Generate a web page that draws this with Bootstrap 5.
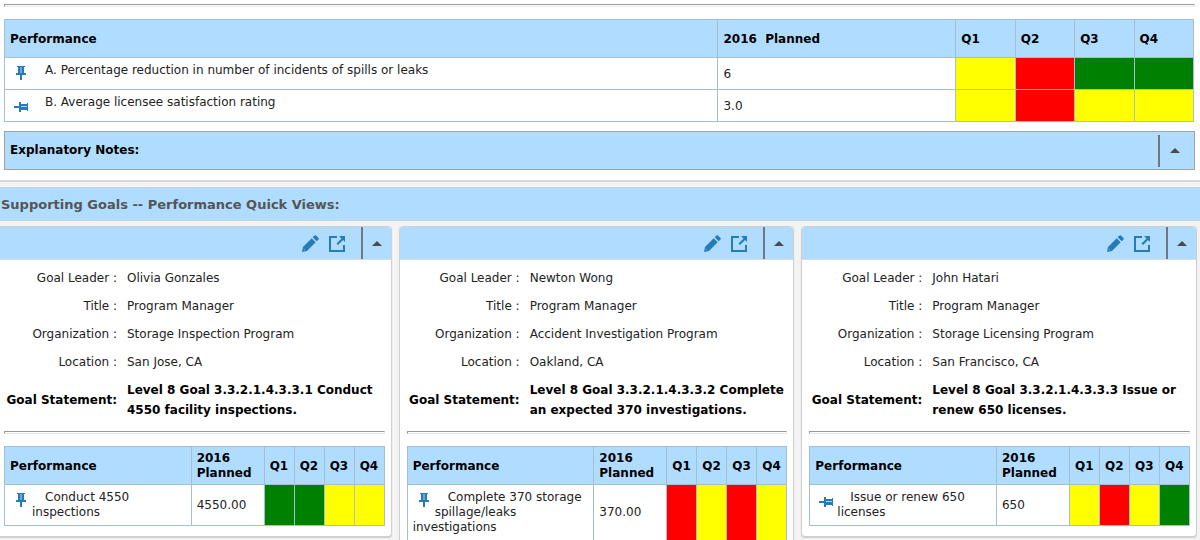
<!DOCTYPE html>
<html lang="en">
<head>
<meta charset="utf-8">
<meta name="viewport" content="width=device-width, initial-scale=1">
<title>Goal Performance</title>
<link href="https://cdn.jsdelivr.net/npm/bootstrap@5.3.0/dist/css/bootstrap.min.css" rel="stylesheet">
<style>
  body { background: #f3f3f3; color: #222; font-family: "DejaVu Sans", Verdana, sans-serif; font-size: 12px; line-height: 15px; overflow-x: hidden; }
  .goal-panel { padding: 4px 5px 10px 4px; border-bottom: 2px solid #d8d8d8; }
  .rule { height: 3px; margin: 0; opacity: 1; border: 1px solid #e8e8e8; border-top-color: #999; border-left-color: #999; }
  .bar { background: #b0ddff; color: #000; }

  .measures-area { padding: 12px 1px 9px 0; }
  .measures { width: 100%; table-layout: fixed; border-collapse: collapse; border: 1px solid #a6bfcf; }
  .measures th, .measures td { border: 1px solid #a6bfcf; padding: 5px; vertical-align: middle; }
  .measures th { background: #b0ddff; color: #000; height: 38px; padding: 4px 0 3px 5px; }
  .measures td.yellow { background: #ff0; }
  .measures td.red { background: #f00; }
  .measures td.green { background: #008000; }
  .measures .task { vertical-align: top; text-indent: 13px; }
  .wide td { padding-bottom: 4px; }
  .wide .plan { width: 20%; }
  .wide .quarter { width: 5%; }
  .compact { margin-top: 12px; }
  .compact .plan { width: 73px; }
  .compact .quarter { width: 30px; }
  .pin { float: left; width: 22px; height: 22px; fill: #267bb9; }

  .notes { height: 39px; padding: 0 5px; border: 1px solid #a3a3a3; }
  .toggle { width: 30px; height: 32px; padding: 0; border: 0; border-left: 2px solid #6d7880; background: none; color: #4a4a4a; }
  .toggle svg { width: 10px; height: 5px; fill: currentColor; }
  .notes .toggle { width: 31px; }

  .section-title { margin: 5px 0; padding: 8px 1px 7px; font-size: 13px; line-height: 17px; color: #555; border: 1px solid #ccd5db; border-width: 1px 0; }
  .goals { display: grid; grid-template-columns: repeat(3, minmax(0, 1fr)); gap: 7px; margin: 0 3px 0 -4px; }
  .goal { --bs-card-border-radius: 4px; --bs-card-inner-border-radius: 3px; --bs-card-border-color: #d0d0d0; color: #222; box-shadow: 0 1px 1px #ccc; }
  .goal-head { height: 33px; border-bottom: 1px solid #d4dde3; border-radius: 3px 3px 0 0; }
  .goal-body { padding: 8px 6px 10px 7px; }
  .actions { gap: 10px; margin-right: 15px; }
  .actions svg { width: 17px; height: 17px; fill: #267bb9; }
  .facts { display: grid; grid-template-columns: 113px minmax(0, 1fr); gap: 8px 10px; margin: 0 0 11px; line-height: 20px; align-items: center; }
  .facts dt { font-weight: normal; text-align: right; white-space: nowrap; }
  .facts dd { margin: 0; }
  .facts .statement { font-weight: bold; color: #000; }
</style>
</head>
<body>

<svg class="d-none" aria-hidden="true">
  <symbol id="pin-down" viewBox="0 0 22 22"><path d="M7 3h8v1h-1v6h2v2h-4v5h-2v-5H6v-2h2V4H7z"/><path d="M10.500 4h1v6h-1z" fill="#b5d5ed"/></symbol>
  <symbol id="pin-side" viewBox="0 0 22 22"><path d="M18 8v8h-1v-1h-6v2H9v-4H4v-2h5V7h2v2h6V8z"/><path d="M11 11h6v1h-6z" fill="#b5d5ed"/></symbol>
  <symbol id="up" viewBox="0 0 10 5"><path d="M0 5 5 0l5 5z"/></symbol>
  <symbol id="pencil" viewBox="0 0 17 17"><path d="M0 17 1 12 9.700 3.300 13.700 7.300 5 16zM10.700 2.300l1.800-1.800q.8-.6 1.500 0l2.500 2.500q.6.7 0 1.500l-1.800 1.800z"/><path d="M1.800 14l1.200 1.200" stroke="#8fc4ea" stroke-width=".7"/></symbol>
  <symbol id="popout" viewBox="0 0 17 17"><path d="M0 1h8v2H2v12h12v-5h2v7H0z"/><path d="M10 1h6v6L14 5 9 10 7.500 8.500l5-5z"/></symbol>
</svg>

<section class="goal-panel bg-white">
  <hr class="rule">
  <div class="measures-area">
    <table class="measures wide">
      <thead>
        <tr><th>Performance</th><th class="plan">2016&nbsp; Planned</th><th class="quarter">Q1</th><th class="quarter">Q2</th><th class="quarter">Q3</th><th class="quarter">Q4</th></tr>
      </thead>
      <tbody>
        <tr><td class="task"><svg class="pin"><use href="#pin-down"/></svg>A. Percentage reduction in number of incidents of spills or leaks</td><td>6</td><td class="yellow"></td><td class="red"></td><td class="green"></td><td class="green"></td></tr>
        <tr><td class="task"><svg class="pin"><use href="#pin-side"/></svg>B. Average licensee satisfaction rating</td><td>3.0</td><td class="yellow"></td><td class="red"></td><td class="yellow"></td><td class="yellow"></td></tr>
      </tbody>
    </table>
  </div>
  <div class="notes bar d-flex align-items-center justify-content-between fw-bold">
    <span>Explanatory Notes:</span>
    <button type="button" class="toggle" aria-label="Collapse notes"><svg class="d-block mx-auto"><use href="#up"/></svg></button>
  </div>
</section>

<h2 class="section-title bar fw-bold">Supporting Goals -- Performance Quick Views:</h2>

<main class="goals align-items-start">
  <article class="card goal">
    <header class="goal-head bar d-flex align-items-center justify-content-end">
      <div class="actions d-flex">
        <a class="d-flex" href="#" aria-label="Edit goal"><svg><use href="#pencil"/></svg></a>
        <a class="d-flex" href="#" aria-label="Open goal"><svg><use href="#popout"/></svg></a>
      </div>
      <button type="button" class="toggle" aria-label="Collapse goal"><svg class="d-block mx-auto"><use href="#up"/></svg></button>
    </header>
    <div class="goal-body">
      <dl class="facts">
        <dt>Goal Leader :</dt><dd>Olivia Gonzales</dd>
        <dt>Title :</dt><dd>Program Manager</dd>
        <dt>Organization :</dt><dd>Storage Inspection Program</dd>
        <dt>Location :</dt><dd>San Jose, CA</dd>
        <dt class="statement">Goal Statement:</dt><dd class="statement">Level 8 Goal 3.3.2.1.4.3.3.1 Conduct 4550 facility inspections.</dd>
      </dl>
      <hr class="rule">
      <table class="measures compact">
        <thead><tr><th>Performance</th><th class="plan">2016 Planned</th><th class="quarter">Q1</th><th class="quarter">Q2</th><th class="quarter">Q3</th><th class="quarter">Q4</th></tr></thead>
        <tbody><tr><td class="task"><svg class="pin"><use href="#pin-down"/></svg>Conduct 4550 inspections</td><td>4550.00</td><td class="green"></td><td class="green"></td><td class="yellow"></td><td class="yellow"></td></tr></tbody>
      </table>
    </div>
  </article>

  <article class="card goal">
    <header class="goal-head bar d-flex align-items-center justify-content-end">
      <div class="actions d-flex">
        <a class="d-flex" href="#" aria-label="Edit goal"><svg><use href="#pencil"/></svg></a>
        <a class="d-flex" href="#" aria-label="Open goal"><svg><use href="#popout"/></svg></a>
      </div>
      <button type="button" class="toggle" aria-label="Collapse goal"><svg class="d-block mx-auto"><use href="#up"/></svg></button>
    </header>
    <div class="goal-body">
      <dl class="facts">
        <dt>Goal Leader :</dt><dd>Newton Wong</dd>
        <dt>Title :</dt><dd>Program Manager</dd>
        <dt>Organization :</dt><dd>Accident Investigation Program</dd>
        <dt>Location :</dt><dd>Oakland, CA</dd>
        <dt class="statement">Goal Statement:</dt><dd class="statement">Level 8 Goal 3.3.2.1.4.3.3.2 Complete an expected 370 investigations.</dd>
      </dl>
      <hr class="rule">
      <table class="measures compact">
        <thead><tr><th>Performance</th><th class="plan">2016 Planned</th><th class="quarter">Q1</th><th class="quarter">Q2</th><th class="quarter">Q3</th><th class="quarter">Q4</th></tr></thead>
        <tbody><tr><td class="task"><svg class="pin"><use href="#pin-down"/></svg>Complete 370 storage spillage/leaks investigations</td><td>370.00</td><td class="red"></td><td class="yellow"></td><td class="red"></td><td class="yellow"></td></tr></tbody>
      </table>
    </div>
  </article>

  <article class="card goal">
    <header class="goal-head bar d-flex align-items-center justify-content-end">
      <div class="actions d-flex">
        <a class="d-flex" href="#" aria-label="Edit goal"><svg><use href="#pencil"/></svg></a>
        <a class="d-flex" href="#" aria-label="Open goal"><svg><use href="#popout"/></svg></a>
      </div>
      <button type="button" class="toggle" aria-label="Collapse goal"><svg class="d-block mx-auto"><use href="#up"/></svg></button>
    </header>
    <div class="goal-body">
      <dl class="facts">
        <dt>Goal Leader :</dt><dd>John Hatari</dd>
        <dt>Title :</dt><dd>Program Manager</dd>
        <dt>Organization :</dt><dd>Storage Licensing Program</dd>
        <dt>Location :</dt><dd>San Francisco, CA</dd>
        <dt class="statement">Goal Statement:</dt><dd class="statement">Level 8 Goal 3.3.2.1.4.3.3.3 Issue or renew 650 licenses.</dd>
      </dl>
      <hr class="rule">
      <table class="measures compact">
        <thead><tr><th>Performance</th><th class="plan">2016 Planned</th><th class="quarter">Q1</th><th class="quarter">Q2</th><th class="quarter">Q3</th><th class="quarter">Q4</th></tr></thead>
        <tbody><tr><td class="task"><svg class="pin"><use href="#pin-side"/></svg>Issue or renew 650 licenses</td><td>650</td><td class="yellow"></td><td class="red"></td><td class="yellow"></td><td class="green"></td></tr></tbody>
      </table>
    </div>
  </article>
</main>

<script src="https://cdn.jsdelivr.net/npm/bootstrap@5.3.0/dist/js/bootstrap.bundle.min.js"></script>
</body>
</html>
